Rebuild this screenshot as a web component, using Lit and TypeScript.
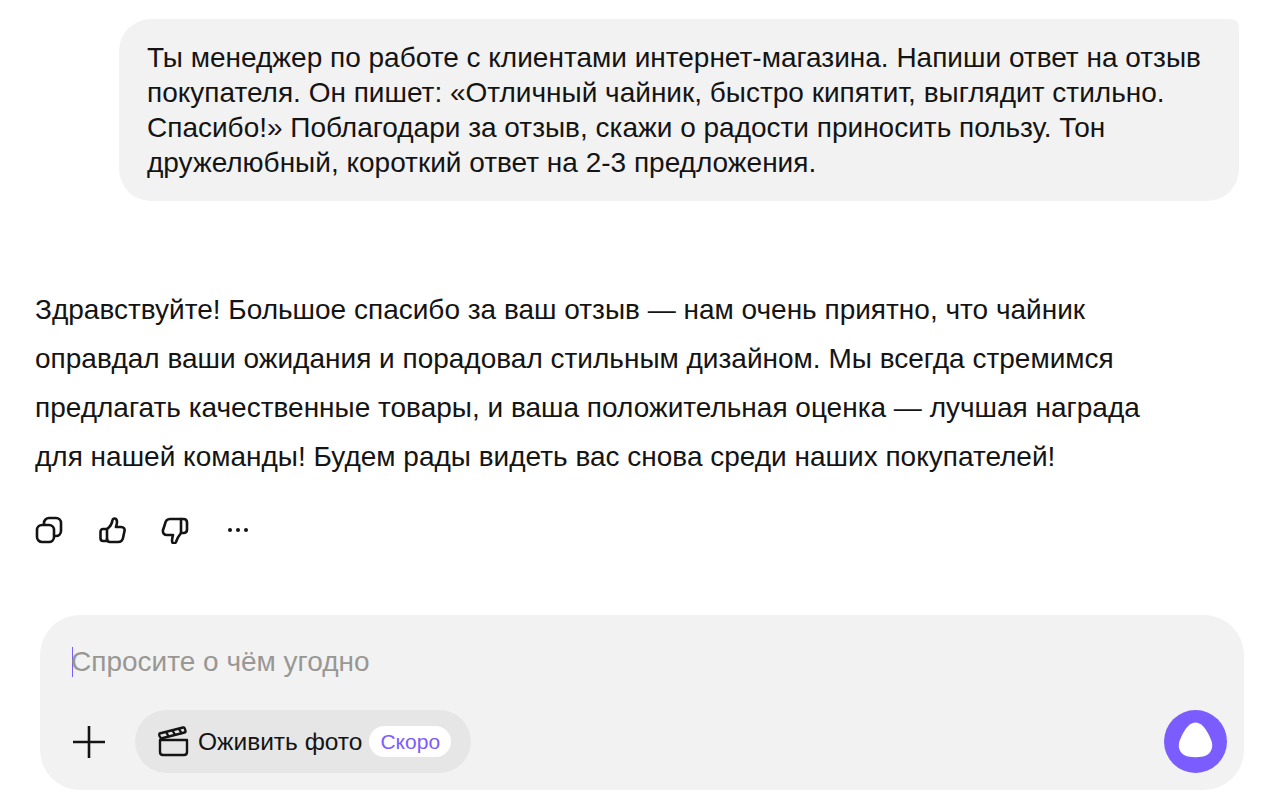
import { LitElement, html, css } from "lit";
import { customElement } from "lit/decorators.js";

@customElement("app-root")
export class AppRoot extends LitElement {
  static styles = css`
    :host {
      display: block;
      width: 1269px;
      height: 807px;
      overflow: hidden;
      background: #fff;
      font-family: "Liberation Sans", Arial, sans-serif;
      color: #141414;
      box-sizing: border-box;
      padding-top: 19px;
    }
    .bubble-row { display: flex; justify-content: flex-end; padding-right: 30px; }
    .bubble {
      width: 1120px;
      height: 182px;
      box-sizing: border-box;
      background: #f2f2f2;
      border-radius: 32px 8px 32px 32px;
      padding: 20.5px 28px 21.5px;
      font-size: 28px;
      line-height: 35px;
    }
    .answer {
      margin: 84px 0 0 35px;
      width: 1110px;
      font-size: 28px;
      line-height: 49px;
    }
    .actions { display: flex; align-items: center; margin: 33px 0 0 35px; height: 32px; gap: 35px; }
    .actions svg { display: block; flex: none; }
    .dots { margin-left: 3px; }
    .composer {
      margin: 69px 0 0 40px;
      width: 1204px;
      height: 175px;
      box-sizing: border-box;
      background: #f2f2f2;
      border-radius: 40px;
      padding: 29px 17px 17px 32px;
      display: flex;
      flex-direction: column;
      justify-content: space-between;
    }
    .input { display: flex; align-items: center; height: 36px; font-size: 28px; color: #999794; }
    .caret { width: 1px; height: 30px; background: #7b5cff; margin-right: -2px; }
    .tools { display: flex; align-items: center; }
    .pill {
      display: flex;
      align-items: center;
      margin-left: 29px;
      height: 63px;
      padding: 0 20px 0 22px;
      box-sizing: border-box;
      border-radius: 32px;
      background: #e6e6e6;
      font-size: 24.5px;
    }
    .pill svg { margin-right: 8px; }
    .tag {
      margin-left: 7px;
      height: 31px;
      padding: 0 11px;
      border-radius: 16px;
      background: #fff;
      color: #7b5cff;
      font-size: 21px;
      line-height: 31px;
    }
    .send { margin-left: auto; width: 63px; height: 63px; display: block; }
  `;

  render() {
    return html`
      <div class="bubble-row">
        <div class="bubble">
          Ты менеджер по работе с клиентами интернет-магазина. Напиши ответ на отзыв покупателя. Он пишет: «Отличный чайник, быстро кипятит, выглядит стильно. Спасибо!» Поблагодари за отзыв, скажи о радости приносить пользу. Тон дружелюбный, короткий ответ на 2-3 предложения.
        </div>
      </div>
      <div class="answer">
        Здравствуйте! Большое спасибо за ваш отзыв — нам очень приятно, что чайник оправдал ваши ожидания и порадовал стильным дизайном. Мы всегда стремимся предлагать качественные товары, и ваша положительная оценка — лучшая награда для нашей команды! Будем рады видеть вас снова среди наших покупателей!
      </div>
      <div class="actions">
        <svg width="28" height="28" viewBox="0 0 28 28" fill="none" stroke="#141414" stroke-width="2.6">
          <rect x="2" y="9" width="17" height="17" rx="5" />
          <path d="M9 8V7a5 5 0 0 1 5-5h7a5 5 0 0 1 5 5v8a5 5 0 0 1-5 5H19.500" />
        </svg>
        <svg width="28" height="28" viewBox="0 0 28 28" fill="none" stroke="#141414" stroke-width="2.6" stroke-linejoin="round" stroke-linecap="round">
          <path d="M9 13c3-2 5-5 5.500-9 .2-2 4.500-2.500 4.500 2 0 2-.5 3.500-1 5h5c3 0 4 2 3.500 4l-1.500 7c-.5 2.500-2 4-5 4h-8c-2 0-3-1-3-3" />
          <path d="M9 13v11M9 13H5C3.500 13 2.500 14 2.500 16v6c0 2 1 3 2.500 3H9" />
        </svg>
        <svg width="28" height="28" viewBox="0 0 28 28" fill="none" stroke="#141414" stroke-width="2.6" stroke-linejoin="round" stroke-linecap="round">
          <path d="M20 3H9C5.500 3 4.500 5 4 8l-2 6c-.5 3 1 5 4 5h6c-.5 2-1 4-1 5.500 0 3.500 3 3.500 4 1.500 1-3 2.500-6 5-9" />
          <path d="M20 3v14h2.500c2.500 0 3.500-1.500 3.500-3.500V6.500C26 4 25 3 22.500 3H20Z" />
        </svg>
        <svg class="dots" width="24" height="6" viewBox="0 0 24 6" fill="#141414">
          <circle cx="3" cy="3" r="2" /><circle cx="11" cy="3" r="2" /><circle cx="19" cy="3" r="2" />
        </svg>
      </div>
      <div class="composer">
        <div class="input"><span class="caret"></span>Спросите о чём угодно</div>
        <div class="tools">
          <svg width="34" height="34" viewBox="0 0 34 34" stroke="#141414" stroke-width="2.6">
            <path d="M1 17h32M17 1v32" />
          </svg>
          <div class="pill">
            <svg width="33" height="33" viewBox="0 0 33 33" fill="none" stroke="#141414" stroke-width="2.4" stroke-linejoin="round">
              <path d="M3 15h27v12c0 2-1 3-3 3H6c-2 0-3-1-3-3V15Z" />
              <path d="M2.500 8.500 26 2.500c1-.2 1.500 0 1.800 1l.7 2.500c.2.800 0 1.300-1 1.500L4 13.500 2.500 11c-.4-1-.4-1.800 0-2.500Z" />
              <path d="M9 7l3 5M15.500 5.500l3 5M22 4l3 5" />
            </svg>
            Оживить фото
            <span class="tag">Скоро</span>
          </div>
          <svg class="send" viewBox="0 0 63 63">
            <circle cx="31.500" cy="31.500" r="31.500" fill="#7b5cff" />
            <path d="M31.500 12.500C39 12.500 44.500 23 47.500 31C50 38.500 46 45 39 46.500C34 47.500 29 47.500 24 46.500C17 45 13 38.500 15.500 31C18.500 23 24 12.500 31.500 12.500Z" fill="#fff" />
          </svg>
        </div>
      </div>
    `;
  }
}
